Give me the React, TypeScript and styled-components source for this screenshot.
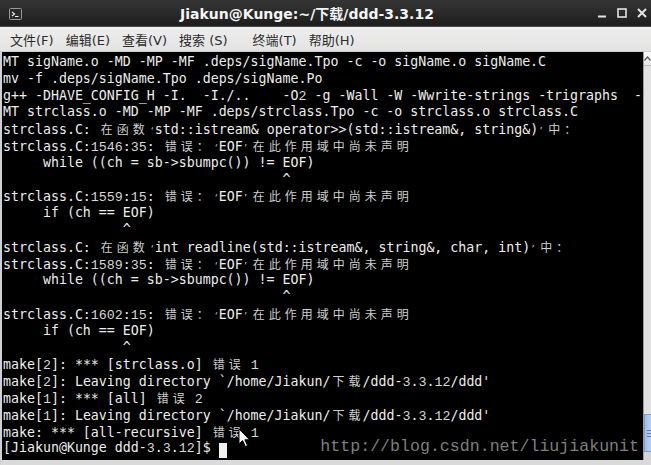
import React from "react";
import styled, { createGlobalStyle } from "styled-components";

type Kind = "text" | "digit" | "wide" | "quote";
type Chunk = { kind: Kind; text: string };

const caret = (col: number) => " ".repeat(col) + "^";

const LINES = [
  "MT sigName.o -MD -MP -MF .deps/sigName.Tpo -c -o sigName.o sigName.C",
  "mv -f .deps/sigName.Tpo .deps/sigName.Po",
  "g++ -DHAVE_CONFIG_H -I.  -I./..    -O2 -g -Wall -W -Wwrite-strings -trigraphs  -",
  "MT strclass.o -MD -MP -MF .deps/strclass.Tpo -c -o strclass.o strclass.C",
  "strclass.C: 在函数‘std::istream& operator>>(std::istream&, string&)’中：",
  "strclass.C:1546:35: 错误：‘EOF’在此作用域中尚未声明",
  "     while ((ch = sb->sbumpc()) != EOF)",
  caret(35),
  "strclass.C:1559:15: 错误：‘EOF’在此作用域中尚未声明",
  "     if (ch == EOF)",
  caret(15),
  "strclass.C: 在函数‘int readline(std::istream&, string&, char, int)’中：",
  "strclass.C:1589:35: 错误：‘EOF’在此作用域中尚未声明",
  "     while ((ch = sb->sbumpc()) != EOF)",
  caret(35),
  "strclass.C:1602:15: 错误：‘EOF’在此作用域中尚未声明",
  "     if (ch == EOF)",
  caret(15),
  "make[2]: *** [strclass.o] 错误 1",
  "make[2]: Leaving directory `/home/Jiakun/下载/ddd-3.3.12/ddd'",
  "make[1]: *** [all] 错误 2",
  "make[1]: Leaving directory `/home/Jiakun/下载/ddd-3.3.12/ddd'",
  "make: *** [all-recursive] 错误 1",
];

const PROMPT = "[Jiakun@Kunge ddd-3.3.12]$ ";

const MENUS = ["文件(F)", "编辑(E)", "查看(V)", "搜索 (S)", "终端(T)", "帮助(H)"];

const kindOf = (c: string): Kind => {
  if (/[0-9]/.test(c)) return "digit";
  if (c === "\u2018" || c === "\u2019") return "quote";
  if (c.charCodeAt(0) > 0x2e80) return "wide";
  return "text";
};

// group plain text and digits in runs, wide chars and quotes get one cell each
const split = (line: string): Chunk[] => {
  const out: Chunk[] = [];
  for (const c of Array.from(line)) {
    const kind = kindOf(c);
    const last = out[out.length - 1];
    if (last && last.kind === kind && (kind === "text" || kind === "digit")) {
      last.text += c;
    } else {
      out.push({ kind, text: c });
    }
  }
  return out;
};

const TermLine = ({ text, children }: { text: string; children?: React.ReactNode }) => (
  <Row>
    {split(text).map((chunk, i) => {
      if (chunk.kind === "wide") return <WideCell key={i}>{chunk.text}</WideCell>;
      if (chunk.kind === "quote")
        return (
          <QuoteCell key={i} $open={chunk.text === "\u2018"}>
            {chunk.text}
          </QuoteCell>
        );
      if (chunk.kind === "digit") return <Digits key={i}>{chunk.text}</Digits>;
      return <Plain key={i}>{chunk.text}</Plain>;
    })}
    {children}
  </Row>
);

const TerminalIcon = () => (
  <svg width="13" height="12" viewBox="0 0 13 12">
    <rect x="0.5" y="0.5" width="12" height="11" rx="1" fill="#2a2a2a" stroke="#9a9a9a" />
    <path d="M3 4 L5.5 6 L3 8" stroke="#f0f0f0" strokeWidth="1.1" fill="none" />
    <path d="M6 8.5 H9.5" stroke="#f0f0f0" strokeWidth="1" />
  </svg>
);

const MinimizeIcon = () => (
  <svg width="10" height="10" viewBox="0 0 10 10">
    <path d="M1 8.5 H9" stroke="#e4e4e4" strokeWidth="2" />
  </svg>
);

const MaximizeIcon = () => (
  <svg width="10" height="10" viewBox="0 0 10 10">
    <rect x="1" y="1" width="8" height="8" fill="none" stroke="#e4e4e4" strokeWidth="1.6" />
  </svg>
);

const CloseIcon = () => (
  <svg width="10" height="10" viewBox="0 0 10 10">
    <path d="M1 1 L9 9 M9 1 L1 9" stroke="#e4e4e4" strokeWidth="2" />
  </svg>
);

const Pointer = () => (
  <svg width="13" height="20" viewBox="0 0 13 20">
    <path
      d="M1 1 L1 16 L4.6 12.6 L7.4 18.6 L9.6 17.6 L6.9 11.8 L11.6 11.8 Z"
      fill="#ffffff"
      stroke="#000000"
      strokeWidth="1"
      strokeLinejoin="round"
    />
  </svg>
);

export default function App() {
  return (
    <Window>
      <GlobalStyle />
      <TitleBar>
        <IconSlot>
          <TerminalIcon />
        </IconSlot>
        <Title>Jiakun@Kunge:~/下载/ddd-3.3.12</Title>
        <Controls>
          <MinimizeIcon />
          <MaximizeIcon />
          <CloseIcon />
        </Controls>
      </TitleBar>
      <MenuBar>
        {MENUS.map((m, i) => (
          <MenuItem key={m} $extra={i === 3}>
            {m}
          </MenuItem>
        ))}
      </MenuBar>
      <Terminal>
        <Screen>
          {LINES.map((line, i) => (
            <TermLine key={i} text={line} />
          ))}
          <TermLine text={PROMPT}>
            <Cursor />
          </TermLine>
        </Screen>
        <ScrollBar>
          <ArrowButton>
            <svg width="7" height="5" viewBox="0 0 7 5">
              <path d="M0.5 4.5 L3.5 1 L6.5 4.5" fill="none" stroke="#555" strokeWidth="1.2" />
            </svg>
          </ArrowButton>
          <Trough />
          <Thumb>
            <Grip />
            <Grip />
            <Grip />
          </Thumb>
          <TroughEnd />
        </ScrollBar>
        <MousePointer>
          <Pointer />
        </MousePointer>
        <Watermark>http://blog.csdn.net/liujiakunit</Watermark>
      </Terminal>
    </Window>
  );
}

const GlobalStyle = createGlobalStyle`
  html, body {
    margin: 0;
    padding: 0;
    background: #000;
  }
  body {
    width: 651px;
    height: 465px;
    overflow: hidden;
  }
`;

const Window = styled.div`
  width: 651px;
  height: 465px;
  display: flex;
  flex-direction: column;
  overflow: hidden;
  background: #000;
`;

const TitleBar = styled.div`
  height: 26px;
  flex: none;
  display: flex;
  align-items: center;
  background: linear-gradient(#353535, #1d1d1d);
  border-bottom: 1px solid #4a4a4a;
`;

const IconSlot = styled.div`
  width: 26px;
  padding-left: 9px;
  padding-top: 2px;
  box-sizing: border-box;
  display: flex;
`;

const Title = styled.div`
  flex: 1;
  text-align: center;
  padding-left: 13px;
  font-family: "DejaVu Sans", "Noto Sans CJK SC", sans-serif;
  font-weight: bold;
  font-size: 14px;
  color: #f4f4f4;
`;

const Controls = styled.div`
  width: 76px;
  display: flex;
  align-items: center;
  gap: 10px;
  padding-left: 22px;
  box-sizing: border-box;
`;

const MenuBar = styled.div`
  height: 25px;
  flex: none;
  display: flex;
  align-items: center;
  padding-left: 4px;
  background: linear-gradient(#eeeeee, #e3e3e2);
  border-bottom: 1px solid #c9c9c9;
  box-sizing: border-box;
`;

const MenuItem = styled.div<{ $extra?: boolean }>`
  padding: 0 6px;
  margin-right: ${(p) => (p.$extra ? "13px" : "0")};
  font-family: "DejaVu Sans", "Noto Sans CJK SC", sans-serif;
  font-size: 13px;
  color: #2c2c2c;
  white-space: pre;
`;

const Terminal = styled.div`
  position: relative;
  flex: 1;
  display: flex;
  border-left: 2px solid #cfcfcf;
  border-bottom: 5px solid #dadada;
  background: #000;
`;

const Screen = styled.div`
  flex: 1;
  padding: 2px 0 0 1px;
  overflow: hidden;
  font-family: "DejaVu Sans Mono", "Noto Sans CJK SC", monospace;
  font-size: 13.28px;
  color: #ededed;
`;

const Row = styled.div`
  display: flex;
  align-items: baseline;
  height: 16.8px;
  line-height: 16.8px;
  white-space: pre;
`;

const Plain = styled.span``;

const Digits = styled.span`
  font-family: "Liberation Mono", monospace;
  font-size: 13.33px;
  color: #d6d6d6;
`;

const WideCell = styled.span`
  flex: none;
  width: 16px;
  text-align: center;
  font-family: "Noto Sans CJK SC", sans-serif;
  font-size: 12px;
  color: #cfcfcf;
`;

const QuoteCell = styled.span<{ $open?: boolean }>`
  flex: none;
  width: 8px;
  font-size: 9px;
  text-align: ${(p) => (p.$open ? "right" : "left")};
  color: #bdbdbd;
`;

const Cursor = styled.span`
  align-self: flex-end;
  width: 8px;
  height: 15px;
  margin-bottom: -1px;
  background: #f2f2f2;
`;

const ScrollBar = styled.div`
  width: 8px;
  flex: none;
  display: flex;
  flex-direction: column;
  background: #e2e2e2;
  border-left: 1px solid #9c9c9c;
  box-sizing: border-box;
`;

const ArrowButton = styled.div`
  height: 13px;
  display: flex;
  align-items: center;
  justify-content: center;
  background: linear-gradient(#fafafa, #e8e8e8);
  border-bottom: 1px solid #b8b8b8;
`;

const Trough = styled.div`
  flex: 1;
`;

const Thumb = styled.div`
  height: 36px;
  display: flex;
  flex-direction: column;
  justify-content: center;
  gap: 2px;
  padding-left: 2px;
  background: linear-gradient(90deg, #9dbde8, #bcd2f0);
  border: 1px solid #7f9fcf;
  border-right: none;
`;

const Grip = styled.div`
  height: 1px;
  width: 6px;
  background: #5a7eb4;
`;

const TroughEnd = styled.div`
  height: 8px;
  background: #d4d4d4;
`;

const MousePointer = styled.div`
  position: absolute;
  left: 236px;
  top: 376px;
  display: flex;
`;

const Watermark = styled.div`
  position: absolute;
  right: 12px;
  bottom: 3px;
  font-family: "Liberation Mono", monospace;
  font-size: 16.6px;
  line-height: 20px;
  color: #8c8c8c;
  opacity: 0.9;
`;
